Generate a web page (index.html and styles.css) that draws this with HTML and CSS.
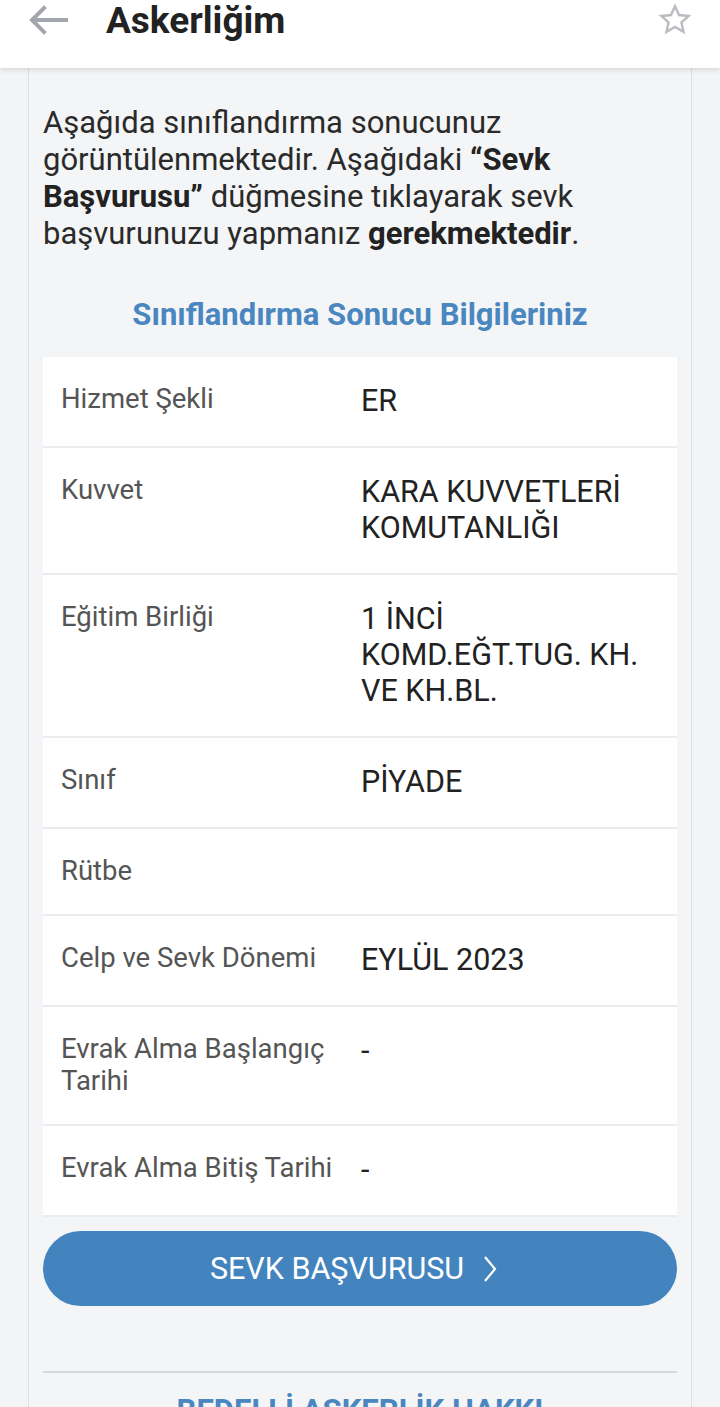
FILE: index.html
```html
<!DOCTYPE html>
<html lang="tr">
<head>
<meta charset="utf-8">
<title>Askerliğim</title>
<link rel="stylesheet" href="styles.css">
</head>
<body>
<header class="topbar">
  <svg class="back" width="40" height="30" viewBox="0 0 40 30">
    <path d="M38 15H5M16 3L4 15l12 12" fill="none" stroke="#a3a6ad" stroke-width="4" stroke-linecap="square"/>
  </svg>
  <h1 class="title">Askerliğim</h1>
  <svg class="star" width="36" height="36" viewBox="0 0 24 24">
    <path d="M12 2.8l2.7 5.9 6.4.6-4.8 4.3 1.4 6.3L12 16.6l-5.7 3.3 1.4-6.3-4.8-4.3 6.4-.6z" fill="none" stroke="#b9bcc1" stroke-width="1.6" stroke-linejoin="miter"/>
  </svg>
</header>
<main class="card">
  <p class="intro">Aşağıda sınıflandırma sonucunuz görüntülenmektedir. Aşağıdaki <b>“Sevk Başvurusu”</b> düğmesine tıklayarak sevk başvurunuzu yapmanız <b>gerekmektedir</b>.</p>
  <h2 class="section-title">Sınıflandırma Sonucu Bilgileriniz</h2>
  <div class="info">
    <div class="row"><div class="label">Hizmet Şekli</div><div class="value">ER</div></div>
    <div class="row"><div class="label">Kuvvet</div><div class="value">KARA KUVVETLERİ KOMUTANLIĞI</div></div>
    <div class="row"><div class="label">Eğitim Birliği</div><div class="value">1 İNCİ KOMD.EĞT.TUG. KH. VE KH.BL.</div></div>
    <div class="row"><div class="label">Sınıf</div><div class="value">PİYADE</div></div>
    <div class="row"><div class="label">Rütbe</div><div class="value"></div></div>
    <div class="row"><div class="label">Celp ve Sevk Dönemi</div><div class="value">EYLÜL 2023</div></div>
    <div class="row"><div class="label">Evrak Alma Başlangıç Tarihi</div><div class="value">-</div></div>
    <div class="row"><div class="label">Evrak Alma Bitiş Tarihi</div><div class="value">-</div></div>
  </div>
  <button class="cta">SEVK BAŞVURUSU
    <svg class="chev" width="16" height="28" viewBox="0 0 16 28"><path d="M3 2l10 12L3 26" fill="none" stroke="#fff" stroke-width="2.2"/></svg>
  </button>
  <hr class="divider">
  <h2 class="section-title upper">BEDELLİ ASKERLİK HAKKI</h2>
</main>
</body>
</html>
```
FILE: styles.css
```css
* { box-sizing: border-box; }
html, body { margin: 0; padding: 0; }
body {
  background: #f3f4f6;
  font-family: Roboto, "Noto Sans", sans-serif;
  color: #222;
  height: 1407px;
  overflow: hidden;
}
.topbar {
  position: relative;
  z-index: 2;
  height: 68px;
  background: #fff;
  display: flex;
  align-items: flex-start;
  padding: 5px 27px 0 28px;
  box-shadow: 0 2px 5px rgba(0,0,0,0.12);
}
.back { flex: none; }
.title {
  margin: -3px 0 0 38px;
  font-size: 37px;
  font-weight: 700;
  line-height: 38px;
  color: #222;
  flex: 1;
}
.star { margin-top: -3px; flex: none; }
.card {
  margin: 0 28px;
  background: #f4f5f7;
  border-left: 1px solid #dcdfe3;
  border-right: 1px solid #dcdfe3;
  padding: 36px 14px 0 14px;
  height: 1339px;
  overflow: hidden;
}
.intro {
  margin: 0;
  font-size: 31px;
  line-height: 37px;
  color: #2a2a2a;
}
.intro b { font-weight: 700; color: #222; }
.section-title {
  margin: 45px 0 24px;
  text-align: center;
  font-size: 31px;
  line-height: 36px;
  font-weight: 700;
  color: #4a87c0;
}
.info { display: flex; flex-direction: column; }
.row {
  display: grid;
  grid-template-columns: 300px 1fr;
  background: #fff;
  padding: 26px 18px 27px 18px;
  border-bottom: 2px solid #ececee;
}
.label {
  font-size: 27.5px;
  line-height: 32px;
  color: #555;
  padding-right: 14px;
}
.value {
  font-size: 30.5px;
  line-height: 36px;
  color: #222;
}
.cta {
  margin-top: 14px;
  width: 100%;
  height: 75px;
  border: none;
  border-radius: 38px;
  background: #4384bf;
  color: #fff;
  font-family: Roboto, "Noto Sans", sans-serif;
  font-size: 30.5px;
  display: flex;
  align-items: center;
  justify-content: center;
  gap: 18px;
  padding: 0 12px 0 0;
}
.chev { flex: none; }
.divider {
  margin: 65px 0 0;
  border: none;
  height: 2px;
  background: #d4d7db;
}
.section-title.upper { margin-top: 20px; }
```
